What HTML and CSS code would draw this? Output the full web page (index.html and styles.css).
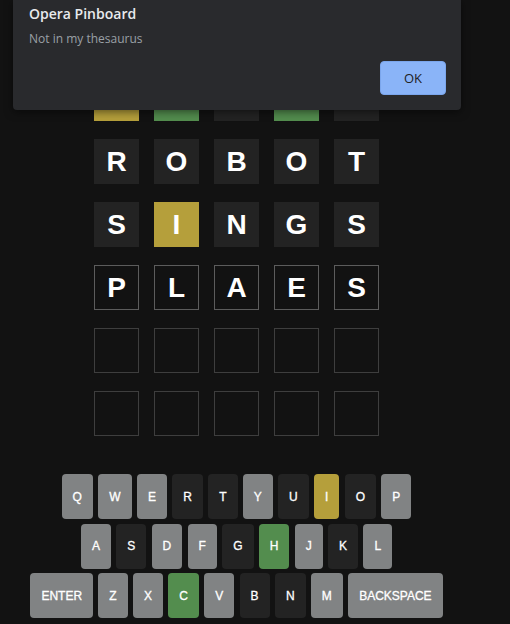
FILE: index.html
```html
<!DOCTYPE html>
<html>
<head>
<meta charset="utf-8">
<link rel="stylesheet" href="styles.css">
</head>
<body>
<div class="app">
  <div class="board">
    <div class="row">
      <div class="tile present">S</div><div class="tile correct">H</div><div class="tile absent">O</div><div class="tile correct">C</div><div class="tile absent">K</div>
    </div>
    <div class="row">
      <div class="tile absent">R</div><div class="tile absent">O</div><div class="tile absent">B</div><div class="tile absent">O</div><div class="tile absent">T</div>
    </div>
    <div class="row">
      <div class="tile absent">S</div><div class="tile present">I</div><div class="tile absent">N</div><div class="tile absent">G</div><div class="tile absent">S</div>
    </div>
    <div class="row">
      <div class="tile filled">P</div><div class="tile filled">L</div><div class="tile filled">A</div><div class="tile filled">E</div><div class="tile filled">S</div>
    </div>
    <div class="row">
      <div class="tile empty"></div><div class="tile empty"></div><div class="tile empty"></div><div class="tile empty"></div><div class="tile empty"></div>
    </div>
    <div class="row">
      <div class="tile empty"></div><div class="tile empty"></div><div class="tile empty"></div><div class="tile empty"></div><div class="tile empty"></div>
    </div>
  </div>
  <div class="keyboard">
    <div class="krow">
      <button class="key">Q</button><button class="key">W</button><button class="key">E</button><button class="key k-absent">R</button><button class="key k-absent">T</button><button class="key">Y</button><button class="key k-absent">U</button><button class="key k-present">I</button><button class="key k-absent">O</button><button class="key">P</button>
    </div>
    <div class="krow">
      <button class="key">A</button><button class="key k-absent">S</button><button class="key">D</button><button class="key">F</button><button class="key k-absent">G</button><button class="key k-correct">H</button><button class="key">J</button><button class="key k-absent">K</button><button class="key">L</button>
    </div>
    <div class="krow">
      <button class="key wide">ENTER</button><button class="key">Z</button><button class="key">X</button><button class="key k-correct">C</button><button class="key">V</button><button class="key k-absent">B</button><button class="key k-absent">N</button><button class="key">M</button><button class="key wide">BACKSPACE</button>
    </div>
  </div>
</div>
<div class="dialog">
  <div class="dialog-title">Opera Pinboard</div>
  <div class="dialog-msg">Not in my thesaurus</div>
  <div class="dialog-actions"><button class="ok">OK</button></div>
</div>
</body>
</html>
```
FILE: styles.css
```css
html, body {
  margin: 0;
  padding: 0;
  background: #121212;
  height: 100%;
  overflow: hidden;
}
.app {
  padding: 76px 37px 0 0;
  display: flex;
  flex-direction: column;
  align-items: center;
}
.board {
  display: flex;
  flex-direction: column;
  gap: 18px;
}
.row {
  display: flex;
  gap: 15px;
}
.tile {
  width: 45px;
  height: 45px;
  box-sizing: border-box;
  display: flex;
  align-items: center;
  justify-content: center;
  font-family: "Liberation Sans", Arial, sans-serif;
  font-weight: bold;
  font-size: 28px;
  color: #fff;
}
.tile.absent { background: #232323; }
.tile.present { background: #b59f3b; }
.tile.correct { background: #538d4e; }
.tile.filled { border: 1px solid #5c5c5c; background: #121212; }
.tile.empty { border: 1px solid #3e3e3e; background: #121212; }
.keyboard {
  margin-top: 38px;
  display: flex;
  flex-direction: column;
  gap: 4.5px;
  align-items: center;
}
.krow {
  display: flex;
  gap: 5.3px;
}
.key {
  height: 45px;
  padding: 0 11px;
  border: 0;
  border-radius: 4px;
  background: #818384;
  color: #fff;
  font-family: "Liberation Sans", Arial, sans-serif;
  font-weight: normal;
  font-size: 12px;
  -webkit-text-stroke: 0.3px #fff;
}
.key.k-absent { background: #232323; }
.key.k-present { background: #b59f3b; }
.key.k-correct { background: #538d4e; }
.dialog {
  position: absolute;
  top: 0;
  left: 13px;
  width: 448px;
  height: 110px;
  box-sizing: border-box;
  background: #292a2d;
  border-radius: 0 0 4px 4px;
  box-shadow: 0 2px 8px rgba(0,0,0,0.5);
  padding: 4px 15px 0 16px;
  font-family: "Open Sans", "Noto Sans", sans-serif;
}
.dialog-title {
  color: #e8eaed;
  font-size: 14px;
  font-weight: 600;
  line-height: 20px;
}
.dialog-msg {
  color: #9aa0a6;
  font-size: 12px;
  line-height: 18px;
  margin-top: 6px;
}
.dialog-actions {
  display: flex;
  justify-content: flex-end;
  margin-top: 13px;
}
.ok {
  width: 66px;
  height: 34px;
  border: 1px solid #7ba6ec;
  border-radius: 4px;
  background: #8ab4f8;
  color: #202124;
  font-family: "Open Sans", "Noto Sans", sans-serif;
  font-size: 13px;
}
```
